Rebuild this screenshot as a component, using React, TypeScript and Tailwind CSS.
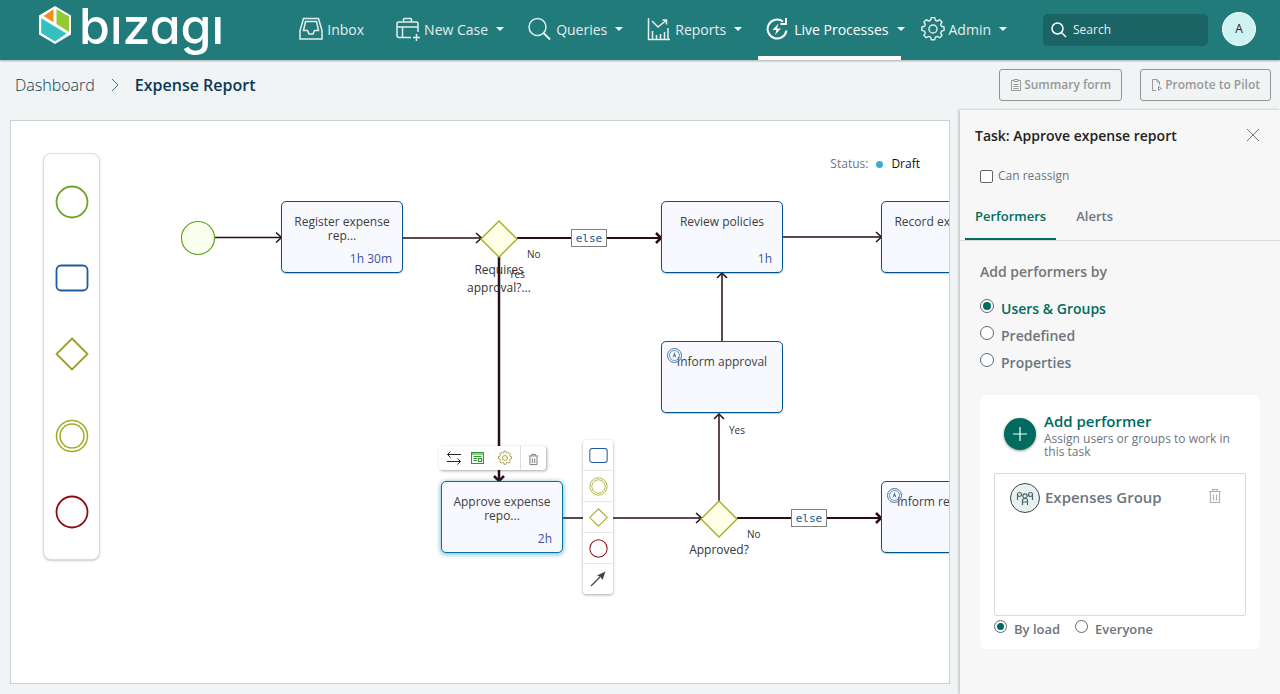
import type { ReactNode } from "react";

function Caret() {
  return (
    <svg className="ml-1 h-1 w-2 shrink-0" viewBox="0 0 8 4" aria-hidden="true">
      <path d="M0 0h8l-4 4z" fill="#fff" />
    </svg>
  );
}

function NavIcon({ children }: { children: ReactNode }) {
  return (
    <svg className="size-6 shrink-0" viewBox="0 0 24 24" fill="none" stroke="currentColor" strokeWidth="1.5" aria-hidden="true">
      {children}
    </svg>
  );
}

const gearPath =
  "M10.200 1.200h3.600l.8 2.800 2 .8 2.500-1.400 2.500 2.500-1.400 2.500.8 2 2.800.8v3.600l-2.800.8-.8 2 1.400 2.500-2.500 2.500-2.500-1.400-2 .8-.8 2.800h-3.600l-.8-2.800-2-.8-2.500 1.400-2.500-2.500 1.400-2.500-.8-2-2.800-.8v-3.600l2.800-.8.8-2-1.400-2.500 2.500-2.500 2.500 1.400 2-.8z";

function Gear({ className, color }: { className: string; color: string }) {
  return (
    <svg className={className} viewBox="-1 -1 26 29" fill="none" stroke={color} strokeWidth="1.800" strokeLinejoin="round" aria-hidden="true">
      <path d={gearPath} />
      <circle cx="12" cy="13.500" r="4.500" />
    </svg>
  );
}

function Trash({ className }: { className: string }) {
  return (
    <svg className={className} viewBox="0 0 14 16" fill="none" stroke="currentColor" strokeWidth="1.200" aria-hidden="true">
      <path d="M1 3.500h12M4.500 3V1.500h5V3M2.500 4v10.500h9V4M5.500 6.500v6M8.500 6.500v6" />
    </svg>
  );
}

function Logo() {
  return (
    <a href="#home" aria-label="bizagi" className="flex h-full items-start gap-2 text-white">
      <svg className="mt-1.5 h-[38px] w-8 shrink-0" viewBox="0 0 32 38" aria-hidden="true">
        <path d="M16 0l16 9.500v19L16 38 0 28.500v-19z" fill="#fff" />
        <path d="M14.500 3.200v13L4.500 10z" fill="#f58a1f" />
        <path d="M17.500 3.200l12.500 7.300v15.500L17.500 18z" fill="#93c933" />
        <path d="M2.200 12.200l25.300 15.300L16 35.500 2.200 27z" fill="#35bfc3" />
      </svg>
      <span className="-mt-1 font-['Inter',sans-serif] text-[50px] leading-[60px] font-medium [font-feature-settings:'cv11']">bızagı</span>
    </a>
  );
}

function NavItem({ icon, label, caret = true, active = false, className = "" }: { icon: ReactNode; label: string; caret?: boolean; active?: boolean; className?: string }) {
  return (
    <a
      href={"#" + label.toLowerCase().replace(" ", "-")}
      className={"relative flex h-full items-center gap-1 pb-0.5 whitespace-nowrap " + (active ? "text-white " : "text-[#e4eeee] ") + className}
    >
      <NavIcon>{icon}</NavIcon>
      <span>{label}</span>
      {caret && <Caret />}
      {active && <span className="absolute right-1 bottom-0 -left-2 h-1 bg-white" />}
    </a>
  );
}

function Header() {
  return (
    <header className="relative z-10 flex h-[60px] items-center bg-[#227b7b] pr-6 pl-[39px] text-[14px] shadow-[0_1px_2px_rgba(0,0,0,0.3)]">
      <Logo />
      <nav className="ml-auto flex h-full items-center gap-6">
        <NavItem
          label="Inbox"
          caret={false}
          className="mr-2"
          icon={
            <>
              <path d="M4.500 1.500h15l3.500 12v8.500H1v-8.500z" />
              <path d="M4.500 13.500l2-9h11l2 9h-4l-1.500 3.500h-4l-1.500-3.500z" />
            </>
          }
        />
        <NavItem
          label="New Case"
          icon={
            <>
              <path d="M15 20.500H3q-2 0-2-2V6.500q0-1.500 2-1.500h17q2 0 2 1.500V15M1 10h21M7.500 5V2.500q0-1 1-1h6q1 0 1 1V5M6.500 10v10M17 20.500h7M20.500 17v7" />
            </>
          }
        />
        <NavItem
          label="Queries"
          icon={
            <>
              <circle cx="9.500" cy="10" r="8.500" />
              <path d="M15.500 16L22 22.500" strokeWidth="2" />
            </>
          }
        />
        <NavItem
          label="Reports"
          icon={
            <>
              <path d="M1.500 1v21.500H23M5.500 22v-8M9.500 22v-4M13.500 22v-5M17.500 22v-7M21 22V11" />
              <path d="M5 4l6 6 8-6.500M15.500 3H19.500v4.500" />
            </>
          }
        />
        <NavItem
          label="Live Processes"
          active
          icon={
            <>
              <path d="M17 4.500a9.500 9.500 0 1 0 3.500 9" strokeWidth="2" />
              <path d="M20 1v6h-5.500" strokeWidth="2" />
              <path d="M12.500 6.500l-6 6.500h4l-1.500 5 6-6.500h-4z" fill="currentColor" stroke="none" />
            </>
          }
        />
        <NavItem
          label="Admin"
          className="-ml-2"
          icon={
            <g transform="translate(0.700 -0.500) scale(0.940)">
              <path d={gearPath} strokeLinejoin="round" />
              <circle cx="12" cy="13.300" r="4.300" />
            </g>
          }
        />
      </nav>
      <label className="ml-9 flex h-8 w-[165px] items-center gap-1.5 rounded-[5px] bg-[#1b6465] px-2 text-white">
        <svg className="size-4 shrink-0" viewBox="0 0 16 16" fill="none" stroke="currentColor" strokeWidth="1.500" aria-hidden="true">
          <circle cx="6.500" cy="6.500" r="5.500" />
          <path d="M10.500 10.500L15 15" />
        </svg>
        <input type="search" aria-label="Search" placeholder="Search" className="w-full min-w-0 bg-transparent text-[12px] outline-none placeholder:text-[#e4eeee]" />
      </label>
      <button type="button" aria-label="Account" className="mb-0.5 ml-3.5 size-[34px] shrink-0 rounded-full border border-white bg-[#cff3f1] text-[12px] text-[#222]">
        A
      </button>
    </header>
  );
}

function HeaderButton({ label, children }: { label: string; children: ReactNode }) {
  return (
    <button type="button" className="flex h-8 items-center gap-0.5 rounded-[3px] border border-[#949494] px-2.5 text-[12px] font-semibold whitespace-nowrap text-[#999]">
      <svg className="h-3 w-3 shrink-0" viewBox="0 0 12 12" fill="none" stroke="currentColor" aria-hidden="true">
        {children}
      </svg>
      {label}
    </button>
  );
}

function SubHeader() {
  return (
    <div className="flex h-[50px] items-center pr-[9px] pl-[15px] text-[16px] text-[#0b3954]">
      <a href="#dashboard" className="font-light">
        Dashboard
      </a>
      <svg className="mx-4 h-3 w-2" viewBox="0 0 8 12" fill="none" stroke="#41708a" aria-hidden="true">
        <path d="M1 0l6 6-6 6" />
      </svg>
      <h1 className="font-semibold">Expense Report</h1>
      <div className="ml-auto flex gap-[18px]">
        <HeaderButton label="Summary form">
          <path d="M4 1.500H1.500v10h9v-10H8M4 .5h4v2H4zM3.500 5.500h5M3.500 7.500h5M3.500 9.500h5" />
        </HeaderButton>
        <HeaderButton label="Promote to Pilot">
          <path d="M5 11.500H1.500V.5H6L8.500 3v3M6 .5V3h2.500M7.500 7v5M7.500 7.500l3 2-3 1.500" />
        </HeaderButton>
      </div>
    </div>
  );
}

function Shape({ kind, className }: { kind: string; className: string }) {
  return (
    <svg className={className} viewBox="0 0 34 34" fill="none" strokeWidth="1.800" aria-hidden="true">
      {kind === "start" && <circle cx="17" cy="17" r="15.500" stroke="#6ca626" />}
      {kind === "task" && <rect x="1.500" y="4.500" width="31" height="25" rx="4.500" stroke="#205b9c" />}
      {kind === "gateway" && <path d="M17 1.500L32.500 17 17 32.500 1.500 17z" stroke="#9d9d22" />}
      {kind === "event" && (
        <>
          <circle cx="17" cy="17" r="15.500" stroke="#a2aa21" strokeWidth="1.500" />
          <circle cx="17" cy="17" r="12" stroke="#a2aa21" strokeWidth="1.500" />
        </>
      )}
      {kind === "end" && <circle cx="17" cy="17" r="15.500" stroke="#8b0d12" />}
    </svg>
  );
}

function Palette() {
  return (
    <div className="absolute top-8 left-8 flex h-[407px] w-[57px] flex-col items-center gap-[42px] rounded-lg border border-[#dcdcdc] bg-white pt-[31px] shadow-[0_1px_2px_rgba(0,0,0,0.2)]">
      <button type="button" aria-label="Start event"><Shape kind="start" className="size-[34px]" /></button>
      <button type="button" aria-label="Task"><Shape kind="task" className="size-[34px]" /></button>
      <button type="button" aria-label="Gateway"><Shape kind="gateway" className="size-[34px]" /></button>
      <button type="button" aria-label="Intermediate event" className="mt-1.5"><Shape kind="event" className="size-[34px]" /></button>
      <button type="button" aria-label="End event"><Shape kind="end" className="size-[34px]" /></button>
    </div>
  );
}

function TaskNode({ name, time, place, selected = false, badge = false }: { name: string; time?: string; place: string; selected?: boolean; badge?: boolean }) {
  return (
    <div
      className={
        "absolute flex h-[72px] w-[122px] flex-col items-center rounded-[5px] border bg-[#f8f9ff] px-2 pt-[13px] text-center text-[12px] leading-[14px] text-[#3d3d3d] " +
        (selected ? "border-[#0072a8] shadow-[0_1px_4px_1px_rgba(0,130,160,0.45)] " : "border-[#00558f] shadow-[0_1px_1px_rgba(0,40,80,0.25)] ") +
        place
      }
    >
      {badge && (
        <svg className="absolute top-1.5 left-[5px] size-[15px]" viewBox="0 0 15 15" fill="none" stroke="#4674a3" aria-hidden="true">
          <circle cx="7.500" cy="7.500" r="7" />
          <circle cx="7.500" cy="7.500" r="5" strokeWidth="0.800" />
          <path d="M7.500 4L9.500 10l-2-2-2 2z" fill="#4674a3" stroke="none" />
        </svg>
      )}
      <span className="w-[106px]">{name}</span>
      {time && <span className="absolute right-2.5 bottom-1.5 text-[#3c52a0]">{time}</span>}
    </div>
  );
}

function ElseTag({ place }: { place: string }) {
  return (
    <span className={"absolute flex h-[18px] w-9 items-center justify-center border border-[#808080] bg-white font-['DejaVu_Sans_Mono',monospace] text-[11px] leading-none text-[#125896] " + place}>else</span>
  );
}

function Connectors() {
  return (
    <svg className="absolute top-0 left-0 h-full w-full" fill="none" aria-hidden="true">
      <g transform="translate(-11 -121)">
        <g stroke="#5a494f" strokeWidth="2">
          <path d="M403 238h79M783 237h98M722 341v-68M719 502v-88M563 518h140" />
        </g>
        <g stroke="#2b0d19">
          <path d="M215 237.500h66" strokeWidth="1.500" />
          <path d="M517 238h144M737 518h144" strokeWidth="2" />
          <path d="M499 256v224" strokeWidth="2.500" />
        </g>
        <g stroke="#2b0d19" strokeWidth="1.500">
          <path d="M276 232.500l5.500 5-5.500 5M476 233l5.500 5-5.500 5M876 232l5.500 5-5.500 5M696 513l5.500 5-5.500 5M717 278l5-5 5 5M714 419l5-5 5 5" />
        </g>
        <g stroke="#2b0d19" strokeWidth="2.500">
          <path d="M656 233l5 5-5 5M876 513l5 5-5 5M494 476l5 5 5-5" />
        </g>
        <circle cx="198" cy="238" r="16.500" fill="#fbffee" stroke="#5ea51f" strokeWidth="1.200" />
        <path d="M499 221l18 18-18 18-18-18z" fill="#feffe6" stroke="#a3ad22" strokeWidth="1.400" />
        <path d="M719 501l18 18-18 18-18-18z" fill="#feffe6" stroke="#a3ad22" strokeWidth="1.400" />
      </g>
    </svg>
  );
}

function TaskToolbar() {
  return (
    <div className="absolute top-[325px] left-[428px] flex h-6 w-[107px] items-stretch rounded-[3px] bg-white shadow-[1px_1px_3px_rgba(0,0,0,0.35)]">
      <div className="flex flex-1 items-center justify-between px-[7px]">
        <button type="button" aria-label="Change flow" className="text-[#222]">
          <svg className="h-3.5 w-4" viewBox="0 0 16 14" fill="none" stroke="currentColor">
            <path d="M15 3.500H1.500M4.500.5l-3 3 3 3M1 10.500h13.500M11.500 7.500l3 3-3 3" />
          </svg>
        </button>
        <button type="button" aria-label="Edit form" className="mr-1">
          <svg className="h-3 w-[13px]" viewBox="0 0 13 12" fill="none" stroke="#2f9a2b">
            <path d="M.5.5h12v11H.5zM.5 2h12M2.500 4.500h8M2.500 6.500h3.500M2.500 8.500h3.500M7.500 6.500h3v3h-3z" strokeWidth="1.200" />
          </svg>
        </button>
        <button type="button" aria-label="Settings">
          <Gear className="size-4" color="#aaa23c" />
        </button>
      </div>
      <button type="button" aria-label="Delete" className="flex w-[26px] items-center justify-center border-l border-[#ddd] pt-0.5 text-[#777]">
        <Trash className="h-[13px] w-[11px]" />
      </button>
    </div>
  );
}

function NextShapes() {
  const cell = "flex h-[31px] w-full items-center justify-center border-b border-[#e8e8e8]";
  return (
    <div className="absolute top-[319px] left-[572px] flex w-[30px] flex-col rounded-[3px] bg-white shadow-[0_1px_3px_rgba(0,0,0,0.35)]">
      <button type="button" aria-label="Append task" className={cell}><Shape kind="task" className="size-[19px]" /></button>
      <button type="button" aria-label="Append event" className={cell}><Shape kind="event" className="size-[19px]" /></button>
      <button type="button" aria-label="Append gateway" className={cell}><Shape kind="gateway" className="size-[19px]" /></button>
      <button type="button" aria-label="Append end event" className={cell}><Shape kind="end" className="size-[19px]" /></button>
      <button type="button" aria-label="Connect" className="flex h-[30px] w-full items-center justify-center">
        <svg className="size-4" viewBox="0 0 16 16">
          <path d="M1 15L10 6" stroke="#444" strokeWidth="1.300" />
          <path d="M15.500.5L12.500 9 10.500 6 7 4.500z" fill="#444" />
        </svg>
      </button>
    </div>
  );
}

function Diagram() {
  return (
    <section aria-label="Process diagram" className="relative m-2.5 min-h-[400px] min-w-0 flex-1 overflow-hidden border border-[#cdd0d2] bg-white">
      <Connectors />
      <Palette />
      <div className="absolute top-[33px] right-[29px] flex items-center text-[12px] leading-5 text-[#111]">
        <span className="text-[#6a7783]">Status:</span>
        <span className="mx-2 size-[7px] rounded-full bg-[#37aed0]" />
        Draft
      </div>
      <TaskNode name="Register expense rep..." time="1h 30m" place="top-[80px] left-[270px]" />
      <TaskNode name="Review policies" time="1h" place="top-[80px] left-[650px]" />
      <TaskNode name="Record expenses" place="top-[80px] left-[870px]" />
      <TaskNode name="Inform approval" badge place="top-[220px] left-[650px]" />
      <TaskNode name="Approve expense repo..." time="2h" selected place="top-[360px] left-[430px]" />
      <TaskNode name="Inform rejection" badge place="top-[360px] left-[870px]" />
      <ElseTag place="top-[108px] left-[560px]" />
      <ElseTag place="top-[388px] left-[780px]" />
      <p className="absolute top-[140px] left-[448px] w-20 text-center text-[12px] leading-[18px] text-[#333]">Requires approval?...</p>
      <p className="absolute top-[420px] left-[668px] w-20 text-center text-[12px] leading-[18px] text-[#333]">Approved?</p>
      <span className="absolute top-[125px] left-[516px] text-[10px] leading-4 text-[#333]">No</span>
      <span className="absolute top-[145px] left-[498px] text-[10px] leading-4 text-[#333]">Yes</span>
      <span className="absolute top-[301px] left-[718px] text-[10px] leading-4 text-[#333]">Yes</span>
      <span className="absolute top-[405px] left-[736px] text-[10px] leading-4 text-[#333]">No</span>
      <TaskToolbar />
      <NextShapes />
    </section>
  );
}

function Radio({ name, label, checked = false, highlight = false, small = false }: { name: string; label: string; checked?: boolean; highlight?: boolean; small?: boolean }) {
  return (
    <label className={"flex items-start gap-[7px] font-semibold " + (small ? "leading-[18px] " : "leading-5 ") + (highlight ? "text-[#006b5e]" : "text-[#6c757d]")}>
      <input
        type="radio"
        name={name}
        defaultChecked={checked}
        className={
          "grid shrink-0 appearance-none place-content-center rounded-full border border-[#596874] bg-white before:rounded-full checked:before:bg-[#006b5e] " +
          (small ? "size-[13px] before:size-[7px]" : "size-3.5 before:size-2")
        }
      />
      {label}
    </label>
  );
}

function TaskPanel() {
  return (
    <aside className="w-80 shrink-0 bg-[#f7f7f7] text-[14px] text-[#6c757d] shadow-[-1px_0_3px_rgba(0,0,0,0.25)]">
      <div className="flex h-[50px] items-center justify-between pr-[21px] pl-[15px]">
        <h2 className="font-semibold text-[#222]">Task: Approve expense report</h2>
        <button type="button" aria-label="Close">
          <svg className="size-3" viewBox="0 0 12 12" stroke="#6c757d" aria-hidden="true">
            <path d="M0 0l12 12M12 0L0 12" />
          </svg>
        </button>
      </div>
      <label className="flex h-8 items-center gap-[5px] pl-5 text-[12px]">
        <input type="checkbox" className="size-[13px] appearance-none rounded-[2px] border border-[#666] bg-white" />
        Can reassign
      </label>
      <div role="tablist" className="flex h-[49px] border-b border-[#d8dadb] px-[5px] text-[13px] font-semibold">
        <button type="button" role="tab" aria-selected="true" className="border-b-2 border-[#006b5e] px-2.5 pt-[3px] text-[#006b5e]">
          Performers
        </button>
        <button type="button" role="tab" aria-selected="false" className="px-5 pt-px">
          Alerts
        </button>
      </div>
      <div className="px-5 pt-[21px]">
        <h3 className="leading-5 font-semibold text-[#757575]">Add performers by</h3>
        <div className="mt-[17px] flex flex-col gap-[7px]">
          <Radio name="source" label="Users &amp; Groups" checked highlight />
          <Radio name="source" label="Predefined" />
          <Radio name="source" label="Properties" />
        </div>
        <div className="mt-[22px] rounded-md bg-white px-3.5 pt-4 pb-[11px]">
          <div className="flex items-start gap-2 pl-2.5">
            <button type="button" aria-label="Add performer" className="mt-[7px] flex size-8 shrink-0 items-center justify-center rounded-full bg-[#006b5e] shadow-[0_1px_3px_rgba(0,0,0,0.4)]">
              <svg className="size-3.5" viewBox="0 0 14 14" stroke="#fff" aria-hidden="true">
                <path d="M7 0v14M0 7h14" strokeWidth="1.200" />
              </svg>
            </button>
            <div>
              <p className="text-[15px] leading-5 font-semibold text-[#006b5e]">Add performer</p>
              <p className="mt-px text-[12px] leading-[13px]">Assign users or groups to work in this task</p>
            </div>
          </div>
          <div className="mt-[15px] h-[143px] rounded-[2px] border border-[#d8dadb] py-[9px] pr-[23px] pl-[15px]">
            <div className="flex items-center">
              <span className="flex size-[30px] items-center justify-center rounded-full border border-[#444] bg-[#e7f1f0]">
                <svg className="h-[15px] w-[18px]" viewBox="0 0 18 15" fill="none" stroke="#52636d" strokeWidth="1.200" aria-hidden="true">
                  <circle cx="3.500" cy="3.500" r="2" />
                  <circle cx="14.500" cy="3.500" r="2" />
                  <circle cx="9" cy="5" r="2.200" />
                  <path d="M1.500 3.500V9M16.500 3.500V9M6.500 14V9.500q0-2 2.500-2t2.500 2V14M7 11h4" />
                </svg>
              </span>
              <span className="mb-0.5 ml-[5px] text-[15px] font-semibold">Expenses Group</span>
              <button type="button" aria-label="Remove Expenses Group" className="mb-1 ml-auto text-[#b0b0b0]">
                <Trash className="h-4 w-3.5" />
              </button>
            </div>
          </div>
          <div className="mt-1 flex gap-[15px] text-[13px]">
            <Radio name="allocation" label="By load" checked small />
            <Radio name="allocation" label="Everyone" small />
          </div>
        </div>
      </div>
    </aside>
  );
}

export default function App() {
  return (
    <div className="flex min-h-screen flex-col bg-[#f0f4f5] font-['Open_Sans','Noto_Sans',sans-serif]">
      <Header />
      <SubHeader />
      <main className="flex flex-1">
        <Diagram />
        <TaskPanel />
      </main>
    </div>
  );
}
